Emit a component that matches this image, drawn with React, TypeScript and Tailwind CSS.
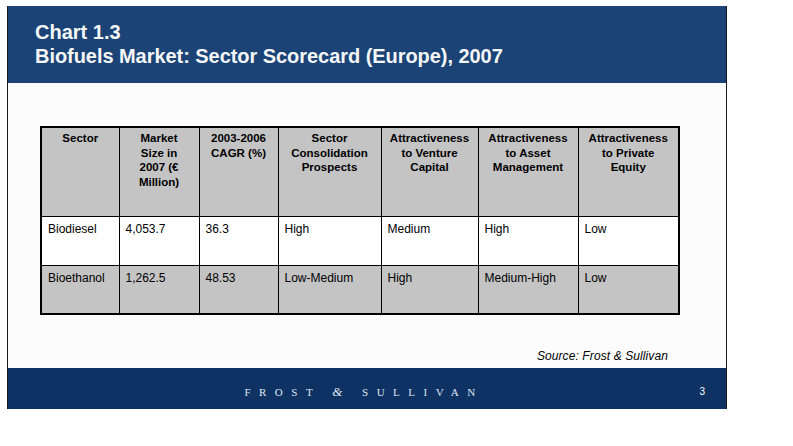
import React from "react";

const cols = [78, 80, 79, 103, 97, 100, 101];

const headers: string[][] = [
  ["Sector"],
  ["Market", "Size in", "2007 (€", "Million)"],
  ["2003-2006", "CAGR (%)"],
  ["Sector", "Consolidation", "Prospects"],
  ["Attractiveness", "to Venture", "Capital"],
  ["Attractiveness", "to Asset", "Management"],
  ["Attractiveness", "to Private", "Equity"],
];

const rows: { cells: string[]; gray: boolean }[] = [
  { cells: ["Biodiesel", "4,053.7", "36.3", "High", "Medium", "High", "Low"], gray: false },
  { cells: ["Bioethanol", "1,262.5", "48.53", "Low-Medium", "High", "Medium-High", "Low"], gray: true },
];

export default function App() {
  return (
    <div className="w-[793px] h-[446px] bg-white pt-[6px] pl-[7px]" style={{ fontFamily: '"Liberation Sans", Arial, sans-serif' }}>
      <div className="w-[720px] h-[403px] flex flex-col border-x border-[#1a1a1a] bg-[#fcfcfc]">
        <div className="h-[77px] bg-[#1b4375] pl-[27px] pt-[14px] text-[20px] leading-[24px] font-bold text-[#f4f6f8]">
          <div>Chart 1.3</div>
          <div className="tracking-[-0.05px]">Biofuels Market: Sector Scorecard (Europe), 2007</div>
        </div>
        <div className="flex-1 flex flex-col pl-[32px] pt-[43px]">
          <table className="table-fixed border-collapse border-2 border-black w-[638px] text-black">
            <colgroup>
              {cols.map((w, i) => (
                <col key={i} style={{ width: w }} />
              ))}
            </colgroup>
            <thead>
              <tr className="h-[89px] bg-[#c4c4c4]">
                {headers.map((h, i) => (
                  <th key={i} className="border border-black align-top text-center font-bold text-[11.5px] leading-[14.5px] pt-[3px] px-[2px]">
                    {h.map((l, j) => (
                      <div key={j}>{l}</div>
                    ))}
                  </th>
                ))}
              </tr>
            </thead>
            <tbody>
              {rows.map((r, i) => (
                <tr key={i} className={`h-[49px] ${r.gray ? "bg-[#c4c4c4]" : "bg-white"}`}>
                  {r.cells.map((c, j) => (
                    <td key={j} className="border border-black align-top text-[12px] leading-[14px] pt-[5px] pl-[6px]">
                      {c}
                    </td>
                  ))}
                </tr>
              ))}
            </tbody>
          </table>
          <div className="mt-[34px] pr-[58px] text-right italic text-[12px] leading-[14px] text-black tracking-[0.1px]">
            Source: Frost &amp; Sullivan
          </div>
        </div>
        <div className="h-[41px] bg-[#0f3264] relative flex items-center justify-center pt-[6px]">
          <div className="text-[11px] leading-[12px] tracking-[8.5px] text-[#dfe6ef] pl-[2px] mr-[8px]" style={{ fontFamily: '"Liberation Serif", "Times New Roman", serif' }}>
            FROST <span className="italic text-[13px]">&amp;</span> SULLIVAN
          </div>
          <div className="absolute right-[21px] top-[18px] text-[10px] leading-[12px] text-white">3</div>
        </div>
      </div>
    </div>
  );
}
